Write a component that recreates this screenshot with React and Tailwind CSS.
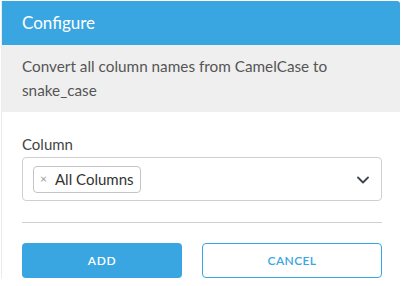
function App() {
	return (
		<div className="w-[401px] h-[286px] overflow-hidden bg-white pt-px pl-px">
			<div className="w-[399px] border-l border-[#e6edf3] rounded-tr-[3px] overflow-hidden font-['Lato','Open_Sans',sans-serif]">
				{/* Header */}
				<div className="h-[44px] bg-[#39a6e2] flex items-center px-5">
					<h2 className="text-white text-[17px] font-normal">Configure</h2>
				</div>

				{/* Description */}
				<div className="bg-[#efefef] h-[67px] px-5 pt-[9px]">
					<p className="text-[#555] text-[15.3px] leading-[24px]">Convert all column names from CamelCase to snake_case</p>
				</div>

				{/* Body */}
				<div className="px-5 pt-[20px]">
					<label className="block text-[#444] text-[15px] leading-[24px] mb-[1px]">Column</label>
					<div className="h-[44px] w-[360px] border border-[#cfcfcf] rounded-[4px] flex items-center pl-[10px] pr-[12px]">
						<div className="h-[27px] flex items-center gap-[8px] border border-[#c4c4c4] rounded-[4px] pl-[6px] pr-[6px]">
							<span className="text-[#999] text-[12px] leading-none">×</span>
							<span className="text-[#333] text-[15px]">All Columns</span>
						</div>
						<div className="flex-1" />
						<svg width="12" height="8" viewBox="0 0 12 8" className="mt-[2px]">
							<path d="M1 1.5 6 6.5 11 1.5" fill="none" stroke="#3d4650" strokeWidth="1.8" strokeLinecap="round" strokeLinejoin="round" />
						</svg>
					</div>

					<div className="w-[360px] h-px bg-[#cfcfcf] mt-[21px]" />

					<div className="w-[360px] flex gap-[20px] mt-[20px]">
						<button className="w-[160px] h-[35px] bg-[#39a6e2] rounded-[4px] text-white text-[12px] font-semibold tracking-[0.6px]">ADD</button>
						<button className="w-[180px] h-[35px] border border-[#39a6e2] rounded-[4px] text-[#39a6e2] text-[12px] font-semibold tracking-[0.4px]">CANCEL</button>
					</div>
				</div>
			</div>
		</div>
	)
}

export default App
